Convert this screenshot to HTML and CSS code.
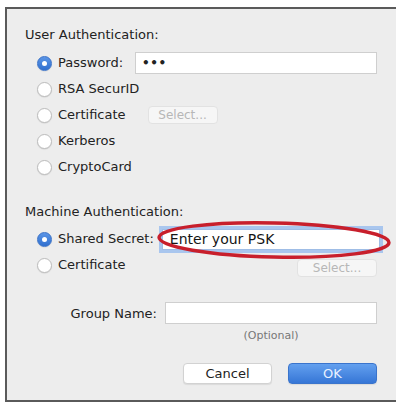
FILE: index.html
```html
<!DOCTYPE html>
<html>
<head>
<meta charset="utf-8">
<link rel="stylesheet" href="styles.css">
</head>
<body>
<div class="dialog">
  <div class="content">
    <div class="section-title">User Authentication:</div>
    <div class="radios">
      <div class="row"><span class="radio on"></span><span class="label">Password:</span><span class="field pw">•••</span></div>
      <div class="row"><span class="radio"></span><span class="label">RSA SecurID</span></div>
      <div class="row"><span class="radio"></span><span class="label">Certificate</span><span class="btn-disabled sel-user">Select...</span></div>
      <div class="row"><span class="radio"></span><span class="label">Kerberos</span></div>
      <div class="row"><span class="radio"></span><span class="label">CryptoCard</span></div>
    </div>
    <div class="section-title machine">Machine Authentication:</div>
    <div class="radios">
      <div class="row"><span class="radio on"></span><span class="label">Shared Secret:</span><span class="field psk">Enter your PSK</span></div>
      <div class="row"><span class="radio"></span><span class="label">Certificate</span><span class="btn-disabled sel-machine">Select...</span></div>
    </div>
    <div class="group-row"><span class="glabel">Group Name:</span><span class="field group"></span></div>
    <div class="optional">(Optional)</div>
    <div class="actions">
      <span class="button">Cancel</span>
      <span class="button primary">OK</span>
    </div>
  </div>
</div>
<svg class="annotation" width="396" height="404" viewBox="0 0 396 404">
  <ellipse cx="274" cy="240" rx="115" ry="17" transform="rotate(1.3 274 240)" fill="none" stroke="#c81f2c" stroke-width="3.5"/>
</svg>
</body>
</html>
```

FILE: styles.css
```css
html, body {
  margin: 0;
  padding: 0;
  background: #ffffff;
  overflow: hidden;
  width: 396px;
  height: 404px;
}

body {
  position: relative;
  font-family: "DejaVu Sans", "Liberation Sans", sans-serif;
  font-size: 13px;
  color: #222222;
}

.dialog {
  margin-top: 7px;
  margin-left: 5px;
  width: 391px;
  box-sizing: border-box;
  background: #ededed;
  border-top: 2px solid #5a5a5a;
  border-left: 2px solid #5a5a5a;
  border-bottom: 2px solid #5a5a5a;
  padding: 18px 0 16px 18px;
}

.content {
  width: 352px;
  display: flex;
  flex-direction: column;
}

.section-title {
  line-height: 16px;
  height: 16px;
}

.section-title.machine {
  margin-top: 24px;
}

.radios {
  display: flex;
  flex-direction: column;
  padding-left: 12px;
  margin-top: 7px;
}

.section-title.machine + .radios {
  margin-top: 6px;
}

.row {
  display: flex;
  align-items: center;
  height: 26px;
}

.radio {
  width: 15px;
  height: 15px;
  box-sizing: border-box;
  border-radius: 50%;
  background: #ffffff;
  border: 1px solid #bdbdbd;
  box-shadow: 0 0.5px 1px rgba(0,0,0,0.12);
  flex: none;
  margin-right: 6px;
  position: relative;
}

.radio.on {
  background: linear-gradient(#5b95e6, #2f6fcf);
  border-color: #3a72c8;
}

.radio.on::after {
  content: "";
  position: absolute;
  left: 4px;
  top: 4px;
  width: 5px;
  height: 5px;
  border-radius: 50%;
  background: #ffffff;
}

.label {
  line-height: 16px;
  white-space: nowrap;
}

.field {
  display: flex;
  align-items: center;
  background: #ffffff;
  border: 1px solid #cfcfcf;
  box-sizing: border-box;
  height: 22px;
}

.field.pw {
  flex: 1;
  margin-left: 12px;
  padding-left: 6px;
  font-size: 12px;
  font-weight: bold;
  letter-spacing: 0.5px;
  color: #222;
}

.field.psk {
  flex: 1;
  margin-left: 8px;
  margin-right: -3px;
  height: 21px;
  padding-left: 7px;
  font-size: 14px;
  color: #151515;
  border-color: #9fbde6;
  box-shadow: 0 0 0 3px #a9c6ee;
}

.btn-disabled {
  display: flex;
  align-items: center;
  justify-content: center;
  height: 18px;
  box-sizing: border-box;
  background: #f6f6f6;
  border: 1px solid #e2e2e2;
  border-radius: 4px;
  font-size: 12px;
  color: #b7b7b7;
}

.sel-user {
  width: 70px;
  margin-left: 22px;
}

.sel-machine {
  width: 80px;
  margin-left: auto;
  margin-top: 5px;
}

.group-row {
  display: flex;
  align-items: center;
  margin-top: 24px;
  height: 22px;
}

.glabel {
  width: 132px;
  text-align: right;
  flex: none;
  margin-right: 8px;
}

.field.group {
  flex: 1;
}

.optional {
  margin-top: 5px;
  padding-left: 140px;
  text-align: center;
  font-size: 11px;
  line-height: 13px;
  color: #777777;
}

.actions {
  display: flex;
  justify-content: flex-end;
  gap: 16px;
  margin-top: 21px;
}

.button {
  width: 89px;
  height: 21px;
  box-sizing: border-box;
  display: flex;
  align-items: center;
  justify-content: center;
  border-radius: 4px;
  background: #ffffff;
  border: 1px solid #d2d2d2;
  box-shadow: 0 1px 1px rgba(0,0,0,0.08);
  color: #222222;
}

.button.primary {
  background: linear-gradient(#63a0ef, #3676d6);
  border-color: #3a74cc;
  color: #e9f1ff;
}

.annotation {
  position: absolute;
  left: 0;
  top: 0;
  pointer-events: none;
}
```
